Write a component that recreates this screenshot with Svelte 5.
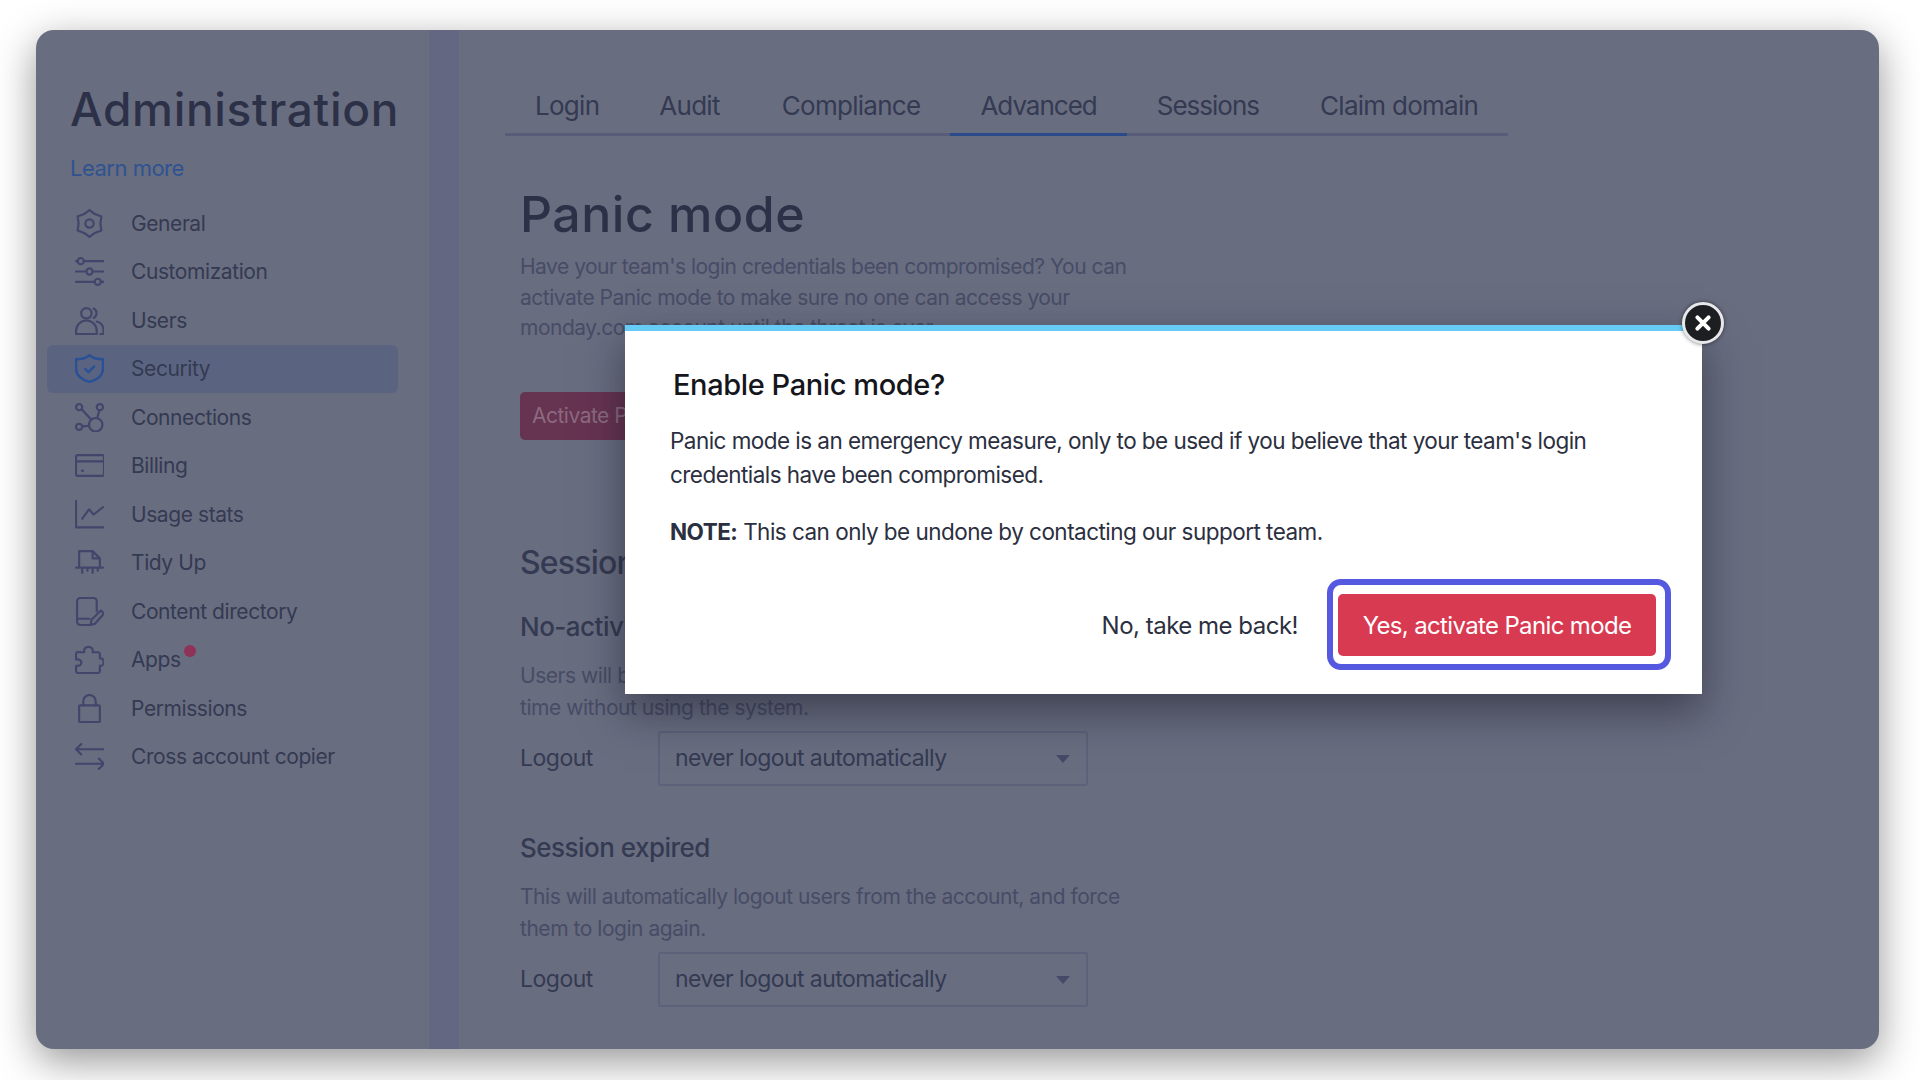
<script>
  const items = [
    ['General','gear'],['Customization','sliders'],['Users','users'],['Security','shield'],
    ['Connections','nodes'],['Billing','card'],['Usage stats','chart'],['Tidy Up','shred'],
    ['Content directory','doc'],['Apps','puzzle'],['Permissions','lock'],['Cross account copier','swap']
  ];
  const tabs = ['Login','Audit','Compliance','Advanced','Sessions','Claim domain'];
</script>

<div class="window">
  <aside class="side">
    <h1>Administration</h1>
    <a class="learn" href="#learn">Learn more</a>
    <ul>
      {#each items as [label, icon]}
        <li class:active={label === 'Security'}>
          <svg class="ico" viewBox="0 0 28 28" fill="none" stroke="currentColor" stroke-width="2.1" stroke-linecap="round" stroke-linejoin="round">
            {#if icon === 'gear'}
              <path d="M14 1 19.250 4.900 25.500 7.200 24.500 14 25.500 20.800 19.250 23.100 14 27 8.750 23.100 2.500 20.800 3.500 14 2.500 7.200 8.750 4.900Z"/><circle cx="14" cy="14" r="4"/>
            {:else if icon === 'sliders'}
              <path d="M8.500 4H28M1 4h1.500M1 14h10M17 14h11M1 24h18M25 24h3"/><circle cx="5.500" cy="4" r="3"/><circle cx="14" cy="14" r="3"/><circle cx="22" cy="24" r="3"/>
            {:else if icon === 'users'}
              <circle cx="11" cy="7" r="5"/><path d="M18 2.500a5 5 0 0 1 0 9M1 27v-3a10 10 0 0 1 20 0v3ZM21 15c4 1 6.500 4.500 6.500 9v3h-3"/>
            {:else if icon === 'shield'}
              <path stroke-width="2.400" d="M14 1C17 4 22 5 27 5v9c0 7-6 11-13 13C7 25 1 21 1 14V5c5 0 10-1 13-4Z"/><path stroke-width="2.400" d="M10 14.500l3 3 5.500-5.500"/>
            {:else if icon === 'nodes'}
              <circle cx="4" cy="4" r="3"/><circle cx="24" cy="4" r="3"/><circle cx="4" cy="23" r="3"/><circle cx="20" cy="21" r="6.500"/><path d="M6.500 6l9 10M23.500 7l-2 7.500M7 22.500l6.500-.5"/>
            {:else if icon === 'card'}
              <rect x="1" y="4" width="27" height="20" rx="1.500"/><path d="M1 10h27"/><path stroke-width="2.500" d="M7 19h.5"/>
            {:else if icon === 'chart'}
              <path d="M1 1v25.500h27"/><path d="M7 18l6.500-9 4.500 5 9-7"/>
            {:else if icon === 'shred'}
              <path d="M4 18V3h13l7 7v8M17 3v7h7M1 19h26M7 19v5M12 19v3M17 19v5M22 19v3"/>
            {:else if icon === 'doc'}
              <path d="M21 14V4a3 3 0 0 0-3-3H5a3 3 0 0 0-3 3v20a3 3 0 0 0 3 3h9M2 21h12M6 27h5"/><path d="M15 27l1-5L25 13l3 3-9 10Z"/>
            {:else if icon === 'puzzle'}
              <path d="M4 7h5c-2-7 10-7 8 0h5a2 2 0 0 1 2 2v4c5-1 5 8 0 7v5a2 2 0 0 1-2 2H3a2 2 0 0 1-2-2v-5c7 1 7-7 0-6V9a2 2 0 0 1 3-2Z"/>
            {:else if icon === 'lock'}
              <rect x="4" y="11" width="20" height="16" rx="1"/><path d="M8 11V7a6 6 0 0 1 12 0v4"/>
            {:else}
              <path d="M28 7H1M6 2 1 7l5 5M1 21h27M23 16l5 5-5 5"/>
            {/if}
          </svg>
          <span class="lbl">{label}</span>
          {#if label === 'Apps'}<i class="dot"></i>{/if}
        </li>
      {/each}
    </ul>
  </aside>
  <div class="band"></div>
  <main class="main">
    <nav class="tabs">
      {#each tabs as t}
        <span class="tab" class:on={t === 'Advanced'}>{t}</span>
      {/each}
    </nav>
    <section class="body">
      <h2>Panic mode</h2>
      <p class="desc first">Have your team's login credentials been compromised? You can<br>activate Panic mode to make sure no one can access your<br>monday.com account until the threat is over.</p>
      <button class="activate">Activate Panic mode</button>
      <h3>Session management</h3>
      <h4 class="noact">No-activity timeout</h4>
      <p class="desc two">Users will be logged out after a certain period of<br>time without using the system.</p>
      <div class="row">
        <span class="rowlabel">Logout</span>
        <div class="select">never logout automatically<b class="caret"></b></div>
      </div>
      <h4 class="exp">Session expired</h4>
      <p class="desc two">This will automatically logout users from the account, and force<br>them to login again.</p>
      <div class="row">
        <span class="rowlabel">Logout</span>
        <div class="select">never logout automatically<b class="caret"></b></div>
      </div>
    </section>
  </main>

  <div class="modal">
    <div class="close">
      <svg viewBox="0 0 16 16" width="18" height="18"><path d="M3 3l10 10M13 3 3 13" stroke="#fff" stroke-width="3.600" stroke-linecap="round"/></svg>
    </div>
    <h5>Enable Panic mode?</h5>
    <p class="mtext">Panic mode is an emergency measure, only to be used if you believe that your team's login<br>credentials have been compromised.</p>
    <p class="mtext note"><strong>NOTE:</strong> This can only be undone by contacting our support team.</p>
    <div class="actions">
      <span class="back">No, take me back!</span>
      <div class="ring"><button class="yes">Yes, activate Panic mode</button></div>
    </div>
  </div>
</div>

<style>
  :global(html) { height: 1080px; overflow: hidden; }
  :global(body) { margin: 0; background: #fff; height: 1080px; overflow: hidden; }
  .window {
    position: relative;
    box-sizing: border-box;
    width: 1843px;
    height: 1019px;
    margin: 30px 0 0 36px;
    display: flex;
    background: #696d80;
    border-radius: 18px;
    box-shadow: 0 12px 40px rgba(0,0,0,.42);
    font-family: Inter, "Liberation Sans", sans-serif;
    color: #343a52;
  }
  .side { width: 393px; flex: none; box-sizing: border-box; padding: 49px 0 0 11px; }
  h1 {
    margin: 0 0 0 23px;
    font-weight: 500;
    font-size: 46px;
    line-height: 60px;
    color: #2d3148;
    letter-spacing: .7px;
    white-space: nowrap;
  }
  .learn { display: block; margin: 14px 0 0 23px; font-size: 22px; line-height: 30px; color: #2f5390; text-decoration: none; letter-spacing: -.5px; }
  ul { list-style: none; margin: 16px 0 0; padding: 0; width: 351px; }
  li { position: relative; height: 48.5px; display: flex; align-items: center; padding-left: 28px; border-radius: 6px; font-size: 21px; letter-spacing: -.42px; }
  li.active { background: #5a6480; }
  li.active .ico { color: #2a5198; }
  .ico { width: 29px; height: 29px; flex: none; color: #41466a; }
  .lbl { margin-left: 27px; }
  .dot { width: 12px; height: 12px; border-radius: 50%; background: #8e3355; position: relative; margin: -18px 0 0 3px; }
  .band { width: 30px; flex: none; background: #636782; }
  .main { flex: 1; padding: 58px 0 0 46px; min-width: 0; }
  .tabs { display: flex; width: 1003px; border-bottom: 3px solid #585c78; height: 45px; }
  .tab { padding: 0 30px; font-size: 26px; line-height: 36px; letter-spacing: -.72px; height: 45px; box-sizing: border-box; white-space: nowrap; }
  .tab:nth-child(3) { margin-left: 2px; }
  .tab:nth-child(4), .tab:nth-child(5) { letter-spacing: -1px; }
  .tab:nth-child(6) { margin-left: 1px; }
  .tab.on { border-bottom: 3px solid #2b4a8c; height: 48px; }
  .body { padding: 0 0 0 15px; }
  h2 { margin: 46px 0 0; font-weight: 500; font-size: 50px; line-height: 64px; color: #2d3148; letter-spacing: .5px; }
  .desc { margin: 0; font-size: 21px; color: #474c66; letter-spacing: -.5px; white-space: nowrap; }
  .first { line-height: 30.500px; margin-top: 6px; }
  .two { line-height: 32px; margin-top: 15px; letter-spacing: -.46px; }
  .activate { display: block; margin: 48px 0 0; width: 260px; height: 48px; padding: 0 0 0 12px; text-align: left; background: #663351; border: 0; border-radius: 5px; font: inherit; font-size: 21px; color: #8b6a80; letter-spacing: -.5px; }
  h3 { margin: 103px 0 0; font-weight: 500; font-size: 32px; line-height: 40px; color: #343a52; letter-spacing: -.8px; white-space: nowrap; }
  h4 { margin: 0; font-weight: 500; font-size: 26px; line-height: 36px; color: #343a52; letter-spacing: -.52px; }
  .noact { margin-top: 26px; }
  .exp { margin-top: 44px; }
  .row { display: flex; align-items: center; margin-top: 7px; }
  .rowlabel { width: 138px; font-size: 23px; letter-spacing: -.5px; color: #343a52; }
  .select { position: relative; box-sizing: border-box; width: 430px; height: 55px; display: flex; align-items: center; padding-left: 15px; border: 2px solid #5d6179; border-radius: 3px; font-size: 23px; letter-spacing: -.58px; color: #343a52; }
  .caret { position: absolute; right: 16px; top: 22px; border: 7px solid transparent; border-top: 8px solid #454a68; border-bottom: 0; }

  .modal {
    position: absolute;
    left: 589px;
    top: 295px;
    width: 1077px;
    height: 369px;
    box-sizing: border-box;
    padding: 0 0 0 45px;
    background: #fff;
    border-top: 6px solid #66ccf5;
    box-shadow: 0 18px 40px rgba(20,22,35,.5);
    color: #2b2f40;
    font-size: 22.500px;
    letter-spacing: -.55px;
  }
  .close { position: absolute; right: -22px; top: -29px; width: 36px; height: 36px; border: 3px solid #e8e8ea; background: #1d1e22; border-radius: 50%; display: flex; align-items: center; justify-content: center; box-shadow: 0 0 4px rgba(0,0,0,.5); }
  h5 { margin: 35px 0 0 3px; font-size: 29px; line-height: 38px; font-weight: 500; color: #15161c; letter-spacing: -.4px; }
  .mtext { margin: 20px 0 0; line-height: 34px; white-space: nowrap; }
  .note { margin-top: 23px; letter-spacing: -.53px; }
  .actions { display: flex; justify-content: flex-end; align-items: center; position: absolute; right: 31px; bottom: 24px; gap: 29px; }
  .back { font-size: 24px; color: #2b2f40; letter-spacing: -.5px; padding-top: 2px; }
  .ring { box-sizing: border-box; width: 344px; height: 91px; padding-left: 5px; border: 6px solid #5559df; border-radius: 14px; display: flex; align-items: center; }
  .yes { width: 318px; height: 62px; background: #d83a52; color: #fff; border: 0; border-radius: 5px; font: inherit; font-size: 24px; letter-spacing: -.65px; padding-top: 2px; }
</style>
